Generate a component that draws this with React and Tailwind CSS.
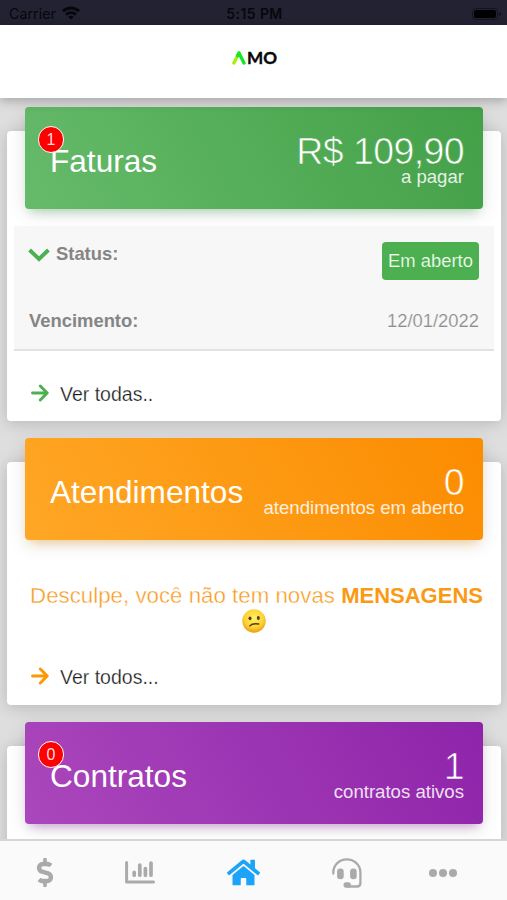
import React from 'react';
import { FaDollarSign, FaHome } from 'react-icons/fa';

const ArrowIcon = ({ className }) => (
    <svg viewBox="0 0 18 18" className={`w-[18px] h-[18px] -mt-[2px] ${className}`} fill="none" stroke="currentColor" strokeWidth="2.9" strokeLinecap="round" strokeLinejoin="round">
        <path d="M1.5 9H16M9.3 2L16.2 9L9.3 16" />
    </svg>
);

const ChevronIcon = () => (
    <svg viewBox="0 0 22 14" className="w-[22px] h-[14px] mt-[2px] text-[#4caf50]" fill="none" stroke="currentColor" strokeWidth="3.9">
        <path d="M1.6 2L11 11L20.4 2" />
    </svg>
);

const WifiIcon = () => (
    <svg viewBox="0 0 18 14" className="w-[18px] h-[14px] -mt-[2px]" fill="none" stroke="#07070b" strokeWidth="2.9">
        <path d="M0.9 5.2C5.4 0.9 12.6 0.9 17.1 5.2" />
        <path d="M4 8.6C6.8 6 11.2 6 14 8.6" />
        <path d="M9 13.6L6.2 10.8C7.7 9.4 10.3 9.4 11.8 10.8Z" fill="#07070b" stroke="none" />
    </svg>
);

const ChartIcon = () => (
    <svg viewBox="0 0 30 23" className="w-[30px] h-[23px]" fill="none" stroke="#aaa" strokeLinecap="round" strokeLinejoin="round">
        <path d="M1.6 1.5V21H28.5" strokeWidth="3" />
        <path d="M9.2 11.4V14.2M14.8 4V14.2M20.4 7.6V14.2M26 2V14.2" strokeWidth="3.7" />
    </svg>
);

const HeadsetIcon = () => (
    <svg viewBox="0 0 30 30" className="w-[30px] h-[30px]" fill="none" stroke="#aaa" strokeWidth="2.3" strokeLinecap="round">
        <path d="M1.3 15.5V14.5C1.3 6.9 7.4 1.3 14.8 1.3S28.4 7 28.4 14.5V25.2C28.4 27.4 27.2 28.5 25 28.5H14.5" />
        <rect x="5.1" y="10.4" width="6.6" height="10.8" rx="3" fill="#aaa" stroke="none" />
        <rect x="18.1" y="10.4" width="6.6" height="10.8" rx="3" fill="#aaa" stroke="none" />
        <rect x="11.5" y="24.3" width="7.4" height="5.3" rx="2.6" fill="#aaa" stroke="none" />
    </svg>
);

const ConfusedFace = () => (
    <svg viewBox="0 0 24 24" className="w-6 h-6">
        <defs>
            <radialGradient id="face" cx="50%" cy="38%" r="62%">
                <stop offset="0%" stopColor="#fff06a" />
                <stop offset="65%" stopColor="#fdd233" />
                <stop offset="100%" stopColor="#eb9c15" />
            </radialGradient>
        </defs>
        <circle cx="12" cy="12" r="11.7" fill="url(#face)" />
        <ellipse cx="8" cy="9.3" rx="1.5" ry="1.9" fill="#573b12" />
        <ellipse cx="16.3" cy="9" rx="1.5" ry="1.9" fill="#573b12" />
        <path d="M7.8 16.9C10 14.4 12.6 14.3 16.8 15" fill="none" stroke="#573b12" strokeWidth="1.4" strokeLinecap="round" />
    </svg>
);

const LogoMark = () => (
    <svg viewBox="0 0 14 14" className="w-[14px] h-[14px]" fill="none" strokeWidth="3.4" strokeLinecap="round" strokeLinejoin="round">
        <path d="M7 2L1.9 12" stroke="#a6f00c" />
        <path d="M5.6 4.6L7 2L12 12" stroke="#14e62a" />
    </svg>
);

const Card = ({ title, value, label, badge, color, thin, className, children }) => (
    <section className={`ml-[7px] mr-[6px] rounded bg-white shadow-[0_2px_16px_rgba(0,0,0,0.18)] ${className}`}>
        <div className={`relative -top-6 mx-[18px] h-[102px] rounded-[4px] flex justify-between items-start text-white pl-[25px] pr-[19px] ${color}`}>
            {badge !== undefined && (
                <span className="absolute left-[13px] top-[19px] w-[26px] h-[27px] rounded-full border border-white bg-[#ff0000] text-[16px] leading-[26px] text-center text-[#ffdcdc]">
                    {badge}
                </span>
            )}
            <h2 className="mt-[36px] text-[31.6px] leading-[36px] whitespace-nowrap">{title}</h2>
            <div className="mt-[23px] text-right whitespace-nowrap">
                <p className={`text-[37.5px] leading-[42px] tracking-[-0.6px] ${thin}`}>{value}</p>
                <p className="-mt-[6px] text-[18.6px] leading-[22px] opacity-85">{label}</p>
            </div>
        </div>
        {children}
    </section>
);

const SeeAll = ({ color, children }) => (
    <a className="flex items-center gap-[11px] pl-6 text-[19.5px] leading-6 text-[#1a1a1a]">
        <ArrowIcon className={color} />
        <span className="[-webkit-text-stroke:0.25px_#fff]">{children}</span>
    </a>
);

const App = () => {
    return (
        <div className="h-[900px] w-full flex flex-col overflow-hidden bg-[#dedede] font-['Liberation_Sans',Arial,sans-serif]">
            {/* Status bar */}
            <div className="h-[25px] shrink-0 bg-[#222233] text-[#07070b] grid grid-cols-3 items-center pl-[9px] pr-[6px] pt-[2px]">
                <div className="flex items-center gap-[6px] text-[14.3px] font-['Inter',sans-serif]">
                    Carrier <WifiIcon />
                </div>
                <span className="text-center text-[14px] font-semibold tracking-[0.4px] -mr-px -ml-[2px] font-['Inter',sans-serif]">5:15 PM</span>
                <div className="flex items-center justify-end gap-px">
                    <div className="w-[26px] h-[12px] rounded-[3.5px] border border-[#13131d] p-px">
                        <div className="h-full rounded-[2px] bg-black" />
                    </div>
                    <div className="w-[2px] h-[4px] rounded-r bg-[#13131d]" />
                </div>
            </div>

            {/* Header */}
            <header className="relative z-10 h-[73px] shrink-0 bg-white flex items-start justify-center gap-px pt-[26px] pl-[2px] shadow-[0_3px_10px_rgba(0,0,0,0.25)]">
                <LogoMark />
                <svg viewBox="0 0 31 20" className="w-[31px] h-[20px]">
                    <text x="0" y="13.4" textLength="30" lengthAdjust="spacingAndGlyphs" fill="#080808" stroke="#080808" strokeWidth="0.4" fontFamily="Lato" fontWeight="700" fontSize="17.6">MO</text>
                </svg>
            </header>

            <main className="flex-1 min-h-0 overflow-hidden pt-[33px]">
                <Card
                    title="Faturas"
                    value="R$ 109,90"
                    label="a pagar"
                    badge="1"
                    thin="[-webkit-text-stroke:0.7px_#49aa4d]"
                    color="bg-[linear-gradient(60deg,#66bb6a,#43a047)] shadow-[0_4px_20px_rgba(0,0,0,0.1),0_7px_10px_-5px_rgba(76,175,80,0.4)]"
                    className="h-[290px]"
                >
                    <div className="-mt-[7px] mx-[7px] h-[125px] bg-[#f7f7f7] border-b-2 border-[#e2e2e2] text-[#858585] text-[18.4px]">
                        <div className="flex items-start justify-between pl-[14px] pr-[15px] pt-[16px]">
                            <div className="flex items-center gap-[6px] h-[24px]">
                                <ChevronIcon />
                                <b>Status:</b>
                            </div>
                            <span className="w-[97px] h-[38px] rounded-[4px] bg-[#4caf50] text-[#f3fff3] text-center leading-[37px] [-webkit-text-stroke:0.2px_#4caf50]">Em aberto</span>
                        </div>
                        <div className="flex items-center justify-between pl-[15px] pr-[15px] mt-[29px] h-6">
                            <b>Vencimento:</b>
                            <span className="text-[#8c8c8c] [-webkit-text-stroke:0.2px_#f7f7f7]">12/01/2022</span>
                        </div>
                    </div>
                    <div className="mt-[31px]">
                        <SeeAll color="text-[#4caf50]">Ver todas..</SeeAll>
                    </div>
                </Card>

                <Card
                    title="Atendimentos"
                    value="0"
                    label="atendimentos em aberto"
                    thin="[-webkit-text-stroke:0.7px_#fc9306]"
                    color="bg-[linear-gradient(60deg,#ffa726,#fb8c00)] shadow-[0_4px_20px_rgba(0,0,0,0.1),0_7px_10px_-5px_rgba(255,152,0,0.4)]"
                    className="mt-[41px] h-[243px]"
                >
                    <p className="mt-[19px] flex flex-col items-center text-[#f89a1c] text-[22.3px] leading-[26px] whitespace-nowrap pl-[5px]">
                        <span><span className="[-webkit-text-stroke:0.4px_#fff]">Desculpe, você não tem novas </span><b className="text-[#fb9a12] text-[22px]">MENSAGENS</b></span>
                        <span className="pr-[5px]"><ConfusedFace /></span>
                    </p>
                    <div className="mt-[32px]">
                        <SeeAll color="text-[#ff9800]">Ver todos...</SeeAll>
                    </div>
                </Card>

                <Card
                    title="Contratos"
                    value="1"
                    label="contratos ativos"
                    badge="0"
                    thin="[-webkit-text-stroke:0.7px_#9223ae]"
                    color="bg-[linear-gradient(60deg,#ab47bc,#8e24aa)] shadow-[0_4px_20px_rgba(0,0,0,0.1),0_7px_10px_-5px_rgba(156,39,176,0.4)]"
                    className="mt-[41px] h-[240px]"
                />
            </main>

            {/* Tab bar */}
            <nav className="relative z-10 h-[61px] shrink-0 bg-[#fafafa] border-t-2 border-[#d5d5d5] grid grid-cols-[90px_99px_108px_99px_93px] justify-items-center items-center text-[#aaa] pt-[4px]">
                <FaDollarSign className="w-[30px] h-[29px]" />
                <ChartIcon />
                <FaHome className="w-[33px] h-[31px] text-[#1ba4fa]" />
                <HeadsetIcon />
                <div className="flex gap-[2px]">
                    <i className="w-2 h-2 rounded-full bg-[#aaa]" />
                    <i className="w-2 h-2 rounded-full bg-[#aaa]" />
                    <i className="w-2 h-2 rounded-full bg-[#aaa]" />
                </div>
            </nav>
        </div>
    );
};

export default App;
